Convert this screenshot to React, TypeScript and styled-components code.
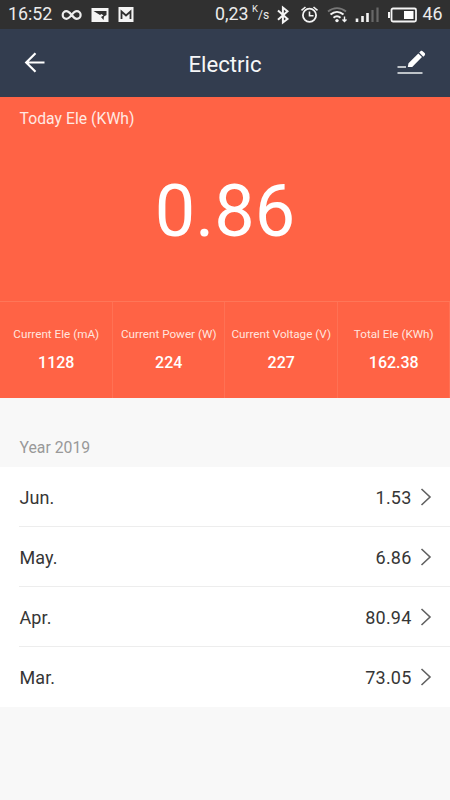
import React from 'react';
import styled, { createGlobalStyle } from 'styled-components';

const Global = createGlobalStyle`
  * { box-sizing: border-box; }
  body { margin: 0; background: #f8f8f8; font-family: Roboto, sans-serif; }
  svg { display: block; flex: none; }
`;
const Screen = styled.main`
  width: 450px; height: 800px; overflow: hidden; background: #f8f8f8; color: #363636;
  display: flex; flex-direction: column;
`;
const StatusBar = styled.div`
  height: 29px; flex: none; background: #303030; color: #ececec;
  display: flex; justify-content: space-between; padding: 0 9px 0 8px;
`;
const StatusGroup = styled.div`display: flex; align-items: center;`;
const StatusText = styled.span<{ $w: number }>`
  width: ${p => p.$w}px; font-size: 17.8px; line-height: 26px; padding-bottom: 2px; white-space: nowrap;
`;
const Unit = styled.span`
  display: flex; width: 27px; line-height: 12px; padding-left: 3px;
`;
const UnitPart = styled.span<{ $drop?: boolean }>`
  margin-top: ${p => (p.$drop ? 1 : -5)}px;
  font-size: ${p => (p.$drop ? 12 : 9.5)}px;
`;
const Header = styled.header`
  height: 68px; flex: none; background: #333d4f; color: #f6f7f8;
  display: grid; grid-template-columns: 70px 1fr 70px; align-items: center; justify-items: center;
`;
const Title = styled.h1`margin: 0; font-size: 22.2px; font-weight: 400; line-height: 28px; padding-top: 2px;`;
const Hero = styled.section`
  height: 204px; flex: none; background: #ff6345; color: #fff; padding: 12px 19.5px 0;
`;
const HeroLabel = styled.div`font-size: 15.7px; line-height: 20px; color: #ffe9e3; letter-spacing: 0.05px;`;
const HeroValue = styled.div`
  text-align: center; font-size: 72px; line-height: 88px; margin-top: 39px; font-weight: 400;
`;
const Stats = styled.section`
  height: 97px; flex: none; background: #ff6345; color: #fff; display: grid;
  grid-template-columns: repeat(4, 1fr); border-top: 1px solid #ff7658;
`;
const Stat = styled.div`
  text-align: center; white-space: nowrap; padding: 24px 0 0 1px;
  border-right: 1px solid #ff7154;
`;
const StatLabel = styled.div`font-size: 11.7px; line-height: 16px; color: #ffe5df;`;
const StatValue = styled.div`font-size: 16px; line-height: 20px; font-weight: 500; margin-top: 11px;`;
const YearLabel = styled.h2`
  margin: 0; height: 69px; flex: none; padding: 40px 19.5px 0;
  font-size: 15.8px; line-height: 20px; font-weight: 400; color: #999;
`;
const List = styled.ul`margin: 0; padding: 0 0 0 19px; list-style: none; background: #fff;`;
const Row = styled.li`
  height: 60px; display: flex; align-items: center; padding-right: 18px; font-size: 18px;
  border-bottom: 1px solid #ededed;
  &:last-child { border-bottom-color: transparent; }
`;
const Month = styled.span`flex: 1; padding: 1px 0 0 0.5px; letter-spacing: 0.1px;`;
const Amount = styled.span`margin-right: 8.5px; padding-top: 1px; letter-spacing: 0.2px;`;

const stats = [
  ['Current Ele (mA)', '1128'],
  ['Current Power (W)', '224'],
  ['Current Voltage (V)', '227'],
  ['Total Ele (KWh)', '162.38'],
];
const months = [['Jun.', '1.53'], ['May.', '6.86'], ['Apr.', '80.94'], ['Mar.', '73.05']];

const LeftIcons = () => (
  <svg width="74" height="28" viewBox="60 0 74 28" fill="none">
    <path d="M71.7 14C69.5 11.5 68.5 10.2 66.5 10.2a3.8 3.8 0 0 0 0 7.6c4 0 6-7.6 10.3-7.6a3.8 3.8 0 0 1 0 7.6c-2 0-3.3-1.3-5.1-3.8" stroke="#eee" strokeWidth="2.2" />
    <path fill="#f4f4f4" fillRule="evenodd" d="M91.5 7h17v14h-17zM93.500 10l6.500 4 1.500-1 2 1.500-2.500 1.500 2.500 3 .5-3.500 2.500-1.500v-4z" />
    <path fill="#f4f4f4" d="M118.500 6h15v15h-15z" />
    <path d="M121.500 18v-7.500l4.500 4 4.500-4V18" stroke="#303030" strokeWidth="1.800" />
  </svg>
);
const RightIcons = () => (
  <svg width="142" height="28" viewBox="276 0 142 28" fill="none" stroke="#f4f4f4">
    <path d="m278 9.500 9.500 8.500-4.600 3.500V6.500l4.600 3.700-9.500 8.500" strokeWidth="2" />
    <circle cx="309.500" cy="14.300" r="6.600" strokeWidth="1.800" />
    <path d="M309.500 10.500v4.300h4M301.500 9.300l4-3.300M317.500 9.300l-4-3.300" strokeWidth="1.600" />
    <path d="M328 10.500c5.500-4.500 12.500-4.500 18 0" stroke="#777" strokeWidth="1.800" />
    <path d="M330.500 13.500c4-3.500 9-3.500 13 0M333.500 16.700c2.200-1.800 4.800-1.800 7 0" strokeWidth="2" />
    <circle cx="337" cy="19.600" r="1.700" fill="#f4f4f4" stroke="none" />
    <path d="M344.500 15.500v5m-2-2 2 2 2-2" strokeWidth="1.400" />
    <path d="M357 17.500V21M362.500 15v6M367.500 12v9" strokeWidth="2.600" />
    <path d="M372.500 9v12M377.500 6.500V21" stroke="#686868" strokeWidth="2.200" />
    <rect x="391.500" y="7.500" width="24.500" height="13" rx="1.500" strokeWidth="1.800" />
    <path d="M389 11v6" strokeWidth="2" />
    <path d="M404 10h9.500v8H404z" fill="#fff" stroke="none" />
  </svg>
);
const BackIcon = () => (
  <svg width="22" height="22" viewBox="0 0.500 22 22" fill="none" stroke="#fff" strokeWidth="2.200">
    <path d="M20.500 11H3M11.500 1.700 2.200 11l9.300 9.300" />
  </svg>
);
const EditIcon = () => (
  <svg width="36" height="26" viewBox="397 50 36 26">
    <path fill="#fff" d="m408.500 63.200 9.800-9.800 3.700 3.700-9.800 9.800h-4.400zM419.200 52.500l1.300-1.200c.8-.7 1.700-.6 2.400.1l1.700 1.700c.7.700.7 1.600 0 2.300l-1.300 1.300z" />
    <path d="M397.500 67h8.500M397.500 73h25" stroke="#edf0f1" strokeWidth="1.500" />
  </svg>
);
const Chevron = () => (
  <svg width="12" height="20" viewBox="0 0 12 20" fill="none" stroke="#606060" strokeWidth="1.600">
    <path d="m1.500 2 8.500 8-8.500 8" />
  </svg>
);

export default function App() {
  return (
    <Screen>
      <Global />
      <StatusBar>
        <StatusGroup><StatusText $w={52}>16:52</StatusText><LeftIcons /></StatusGroup>
        <StatusGroup>
          <StatusText $w={34}>0,23</StatusText>
          <Unit><UnitPart>K</UnitPart><UnitPart $drop>/s</UnitPart></Unit>
          <RightIcons />
          <StatusText $w={23}>&nbsp;46</StatusText>
        </StatusGroup>
      </StatusBar>
      <Header><BackIcon /><Title>Electric</Title><EditIcon /></Header>
      <Hero><HeroLabel>Today Ele (KWh)</HeroLabel><HeroValue>0.86</HeroValue></Hero>
      <Stats>
        {stats.map(([label, value]) => (
          <Stat key={label}><StatLabel>{label}</StatLabel><StatValue>{value}</StatValue></Stat>
        ))}
      </Stats>
      <YearLabel>Year 2019</YearLabel>
      <List>
        {months.map(([month, amount]) => (
          <Row key={month}><Month>{month}</Month><Amount>{amount}</Amount><Chevron /></Row>
        ))}
      </List>
    </Screen>
  );
}
